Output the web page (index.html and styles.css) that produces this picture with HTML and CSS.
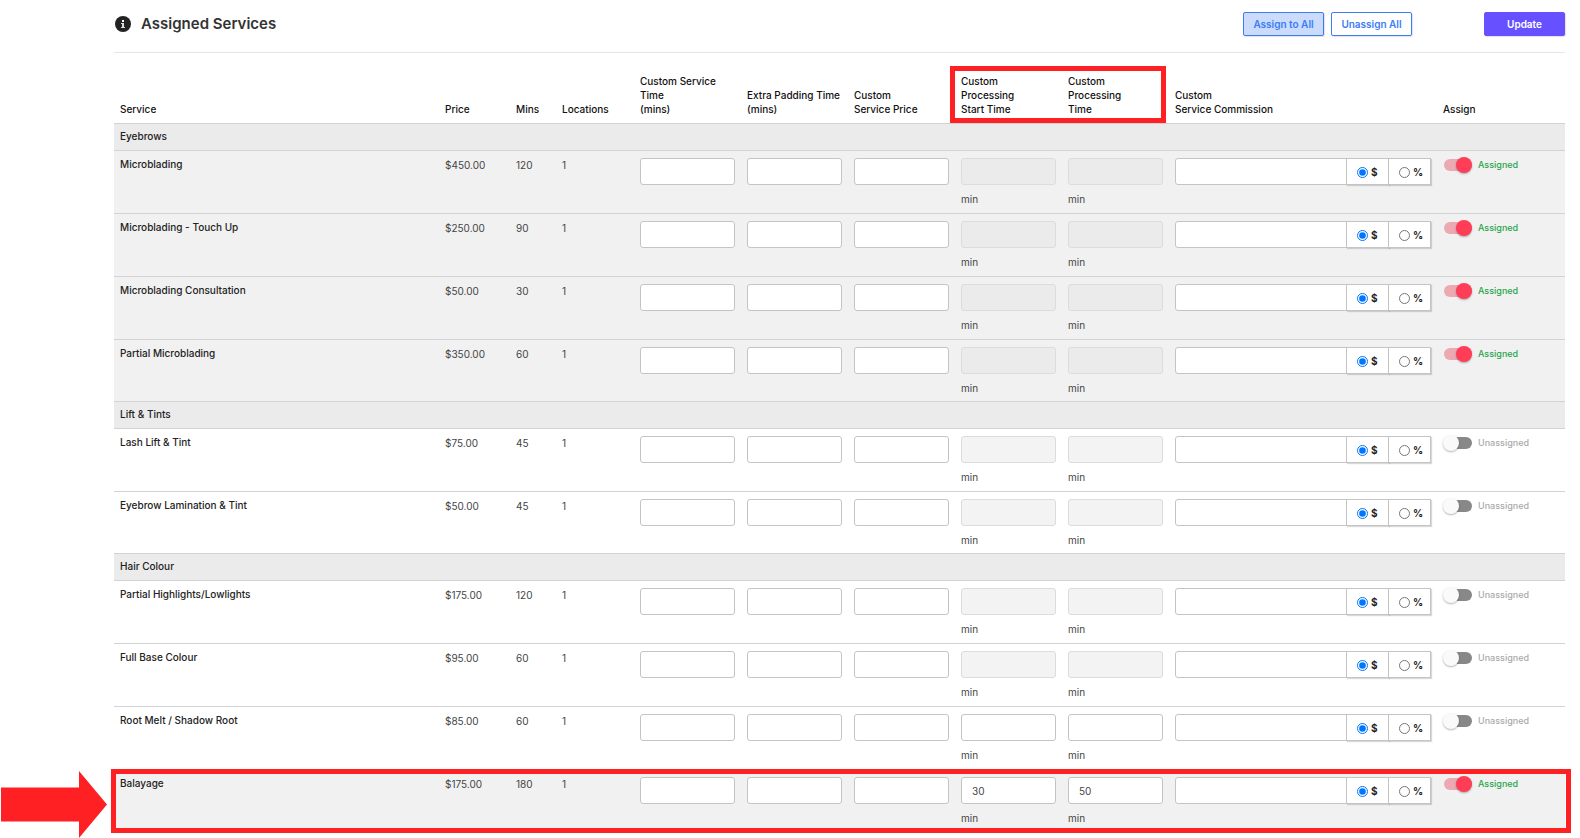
FILE: index.html
```html
<!DOCTYPE html>
<html lang="en">
<head>
    <meta charset="UTF-8">
    <meta name="viewport" content="width=device-width, initial-scale=1.0">
    <title>Assigned Services</title>
    <link rel="stylesheet" href="styles.css">
</head>
<body>
    <form class="page">
        <!-- Title and bulk actions -->
        <header class="header">
            <svg class="info-icon" viewBox="0 0 16 16" aria-hidden="true">
                <circle cx="8" cy="8" r="8" fill="#222"/>
                <rect x="7" y="4" width="2" height="2" fill="#fff"/>
                <path d="M6 7h3v4h1v1H6v-1h1V8H6z" fill="#ddd"/>
            </svg>
            <h1>Assigned Services</h1>
            <div class="actions">
                <button type="button" class="btn btn-active">Assign to All</button>
                <button type="button" class="btn">Unassign All</button>
                <button type="submit" class="btn btn-update">Update</button>
            </div>
        </header>

        <!-- Services -->
        <table class="services" id="services">
            <colgroup>
                <col>
                <col class="col-price">
                <col class="col-mins">
                <col class="col-locations">
                <col class="col-input" span="5">
                <col class="col-commission">
                <col class="col-assign">
            </colgroup>
            <thead>
                <tr>
                    <th>Service</th>
                    <th>Price</th>
                    <th>Mins</th>
                    <th>Locations</th>
                    <th>Custom Service Time<br>(mins)</th>
                    <th class="nowrap">Extra Padding Time<br>(mins)</th>
                    <th>Custom<br>Service Price</th>
                    <th class="marked">Custom<br>Processing<br>Start Time<span class="mark-head"></span></th>
                    <th>Custom<br>Processing<br>Time</th>
                    <th>Custom<br>Service Commission</th>
                    <th>Assign</th>
                </tr>
            </thead>
        </table>
    </form>

    <script>
        const groups = [
            { title: 'Eyebrows', services: [
                { name: 'Microblading', price: '$450.00', mins: 120, assigned: true },
                { name: 'Microblading - Touch Up', price: '$250.00', mins: 90, assigned: true },
                { name: 'Microblading Consultation', price: '$50.00', mins: 30, assigned: true },
                { name: 'Partial Microblading', price: '$350.00', mins: 60, assigned: true }
            ]},
            { title: 'Lift & Tints', services: [
                { name: 'Lash Lift & Tint', price: '$75.00', mins: 45 },
                { name: 'Eyebrow Lamination & Tint', price: '$50.00', mins: 45 }
            ]},
            { title: 'Hair Colour', services: [
                { name: 'Partial Highlights/Lowlights', price: '$175.00', mins: 120 },
                { name: 'Full Base Colour', price: '$95.00', mins: 60 },
                { name: 'Root Melt / Shadow Root', price: '$85.00', mins: 60, processing: ['', ''] },
                { name: 'Balayage', price: '$175.00', mins: 180, assigned: true, processing: ['30', '50'], marked: true }
            ]}
        ];

        const arrow = `
            <svg class="mark-arrow" viewBox="0 0 107 67" aria-hidden="true">
                <path d="M1 16.500H79V0L107 33.500L79 67V50.500H1z" fill="#ff2024"/>
            </svg>`;

        function textBox(label, value, disabled) {
            return `<input type="text" class="box" aria-label="${label}" value="${value}" ${disabled ? 'disabled' : ''}>`;
        }

        function serviceRow(service, id) {
            const name = service.name.replace('&', '&amp;');
            const locked = !service.processing;
            const [start, time] = service.processing || ['', ''];
            return `
                <tr class="service ${service.assigned ? 'assigned' : ''} ${service.marked ? 'marked' : ''}">
                    <td class="name">${name}${service.marked ? '<span class="mark-row"></span>' + arrow : ''}</td>
                    <td>${service.price}</td>
                    <td>${service.mins}</td>
                    <td>1</td>
                    <td>${textBox('Custom service time', '')}</td>
                    <td>${textBox('Extra padding time', '')}</td>
                    <td>${textBox('Custom service price', '')}</td>
                    <td>${textBox('Processing start time', start, locked)}<div class="unit">min</div></td>
                    <td>${textBox('Processing time', time, locked)}<div class="unit">min</div></td>
                    <td>
                        <div class="commission">
                            ${textBox('Service commission', '')}
                            <label><input type="radio" name="type_${id}" checked>$</label>
                            <label><input type="radio" name="type_${id}">%</label>
                        </div>
                    </td>
                    <td>
                        <label class="toggle">
                            <input type="checkbox" ${service.assigned ? 'checked' : ''}>
                            ${service.assigned ? 'Assigned' : 'Unassigned'}
                        </label>
                    </td>
                </tr>`;
        }

        // One tbody for each service group
        let id = 0;
        groups.forEach(group => {
            const body = document.createElement('tbody');
            let rows = `<tr class="group"><td colspan="11">${group.title.replace('&', '&amp;')}</td></tr>`;
            group.services.forEach(service => {
                id++;
                rows += serviceRow(service, id);
            });
            body.innerHTML = rows;
            document.getElementById('services').appendChild(body);
        });
    </script>
</body>
</html>
```
FILE: styles.css
```css
* {
    box-sizing: border-box;
}
body {
    margin: 0;
    font-family: Inter, "Open Sans", sans-serif;
    font-size: 10px;
    line-height: 14px;
    color: #444;
    background-color: #fff;
}
input, button {
    font-family: inherit;
    font-size: inherit;
    color: inherit;
}
.page {
    min-height: 100vh;
    padding: 0 15px 0 114px;
}

/* Header */
.header {
    display: flex;
    align-items: center;
    height: 53px;
    padding: 0 0 5px 1px;
    border-bottom: 1px solid #e6e6e6;
}
.info-icon {
    width: 16px;
    height: 16px;
}
h1 {
    margin: 0 0 0 10px;
    font-size: 15px;
    font-weight: 600;
    line-height: 20px;
    color: #333;
}
.actions {
    display: flex;
    gap: 7px;
    margin-left: auto;
}
.btn {
    width: 81px;
    height: 24px;
    padding: 0;
    border: 1px solid #3b7df5;
    border-radius: 2px;
    background-color: #fff;
    color: #3b7df5;
    font-weight: 600;
    box-shadow: 1px 1px 1px rgba(0, 0, 0, 0.12);
}
.btn-active {
    background-color: #cadbfc;
}
.btn-update {
    margin-left: 65px;
    border-color: #6650ff;
    background-color: #6650ff;
    color: #fff;
}

/* Table */
.services {
    width: 100%;
    margin-top: 13px;
    border-collapse: separate;
    border-spacing: 0;
    table-layout: fixed;
}
.col-price { width: 71px; }
.col-mins { width: 46px; }
.col-locations { width: 78px; }
.col-input { width: 107px; }
.col-commission { width: 268px; }
.col-assign { width: 128px; }
th {
    height: 57px;
    padding: 7px 6px;
    text-align: left;
    vertical-align: bottom;
    font-weight: 500;
    color: #111;
}
.nowrap {
    white-space: nowrap;
}
td {
    padding: 7px 6px 0;
    border-top: 1px solid #d2d2d2;
    vertical-align: top;
}
.group td {
    height: 27px;
    padding-top: 5px;
    background-color: #ebebeb;
    color: #222;
    font-weight: 500;
}
.service td {
    height: 63px;
}
.service:last-child td {
    height: 62px;
}
.assigned td {
    background-color: #f1f1f1;
}
.service .name {
    padding-top: 6px;
    color: #222;
    font-weight: 500;
}

/* Fields */
.box {
    display: block;
    width: 100%;
    height: 27px;
    padding: 0 10px;
    border: 1px solid #c4c4c4;
    border-radius: 3px;
    background-color: #fff;
}
.box:disabled {
    border-color: #dcdcdc;
    background-color: #f3f3f3;
}
.assigned .box:disabled {
    background-color: #ebebeb;
}
.unit {
    margin-top: 7px;
}
.commission {
    display: flex;
    height: 27px;
}
.commission .box {
    flex: 1;
    border-radius: 3px 0 0 3px;
}
.commission label {
    display: flex;
    align-items: center;
    gap: 3px;
    width: 43px;
    padding: 1px 0 0 10px;
    margin-left: -1px;
    border: 1px solid #c4c4c4;
    background-color: #fff;
    box-shadow: 1px 1px 1px rgba(0, 0, 0, 0.15);
    color: #222;
    font-weight: 700;
}
.commission input[type="radio"] {
    width: 11px;
    height: 11px;
    margin: 0;
}

/* Toggle */
.toggle {
    display: flex;
    align-items: center;
    gap: 6px;
    padding-left: 1px;
    font-size: 9px;
    font-weight: 500;
    color: #aaa;
}
.assigned .toggle {
    color: #27a54b;
}
.toggle input {
    appearance: none;
    position: relative;
    width: 28px;
    height: 12px;
    margin: 1px 0;
    border-radius: 6px;
    background-color: #888;
}
.toggle input::before {
    content: "";
    position: absolute;
    top: -2px;
    left: -1px;
    width: 16px;
    height: 16px;
    border-radius: 50%;
    background-color: #fafafa;
    box-shadow: 0 1px 2px rgba(0, 0, 0, 0.3);
}
.toggle input:checked {
    background-color: #eda9b1;
}
.toggle input:checked::before {
    left: 12px;
    background-color: #ff3d57;
}

/* Red markers */
.marked {
    position: relative;
}
.mark-head, .mark-row {
    position: absolute;
    border: 5px solid #ff2024;
    pointer-events: none;
}
.mark-head {
    top: 0;
    bottom: 0;
    left: -5px;
    width: 216px;
}
.mark-row {
    top: 0;
    right: -6px;
    bottom: -2px;
    left: -3px;
}
.mark-arrow {
    position: absolute;
    top: 2px;
    left: -114px;
    width: 107px;
    height: 67px;
}
```
